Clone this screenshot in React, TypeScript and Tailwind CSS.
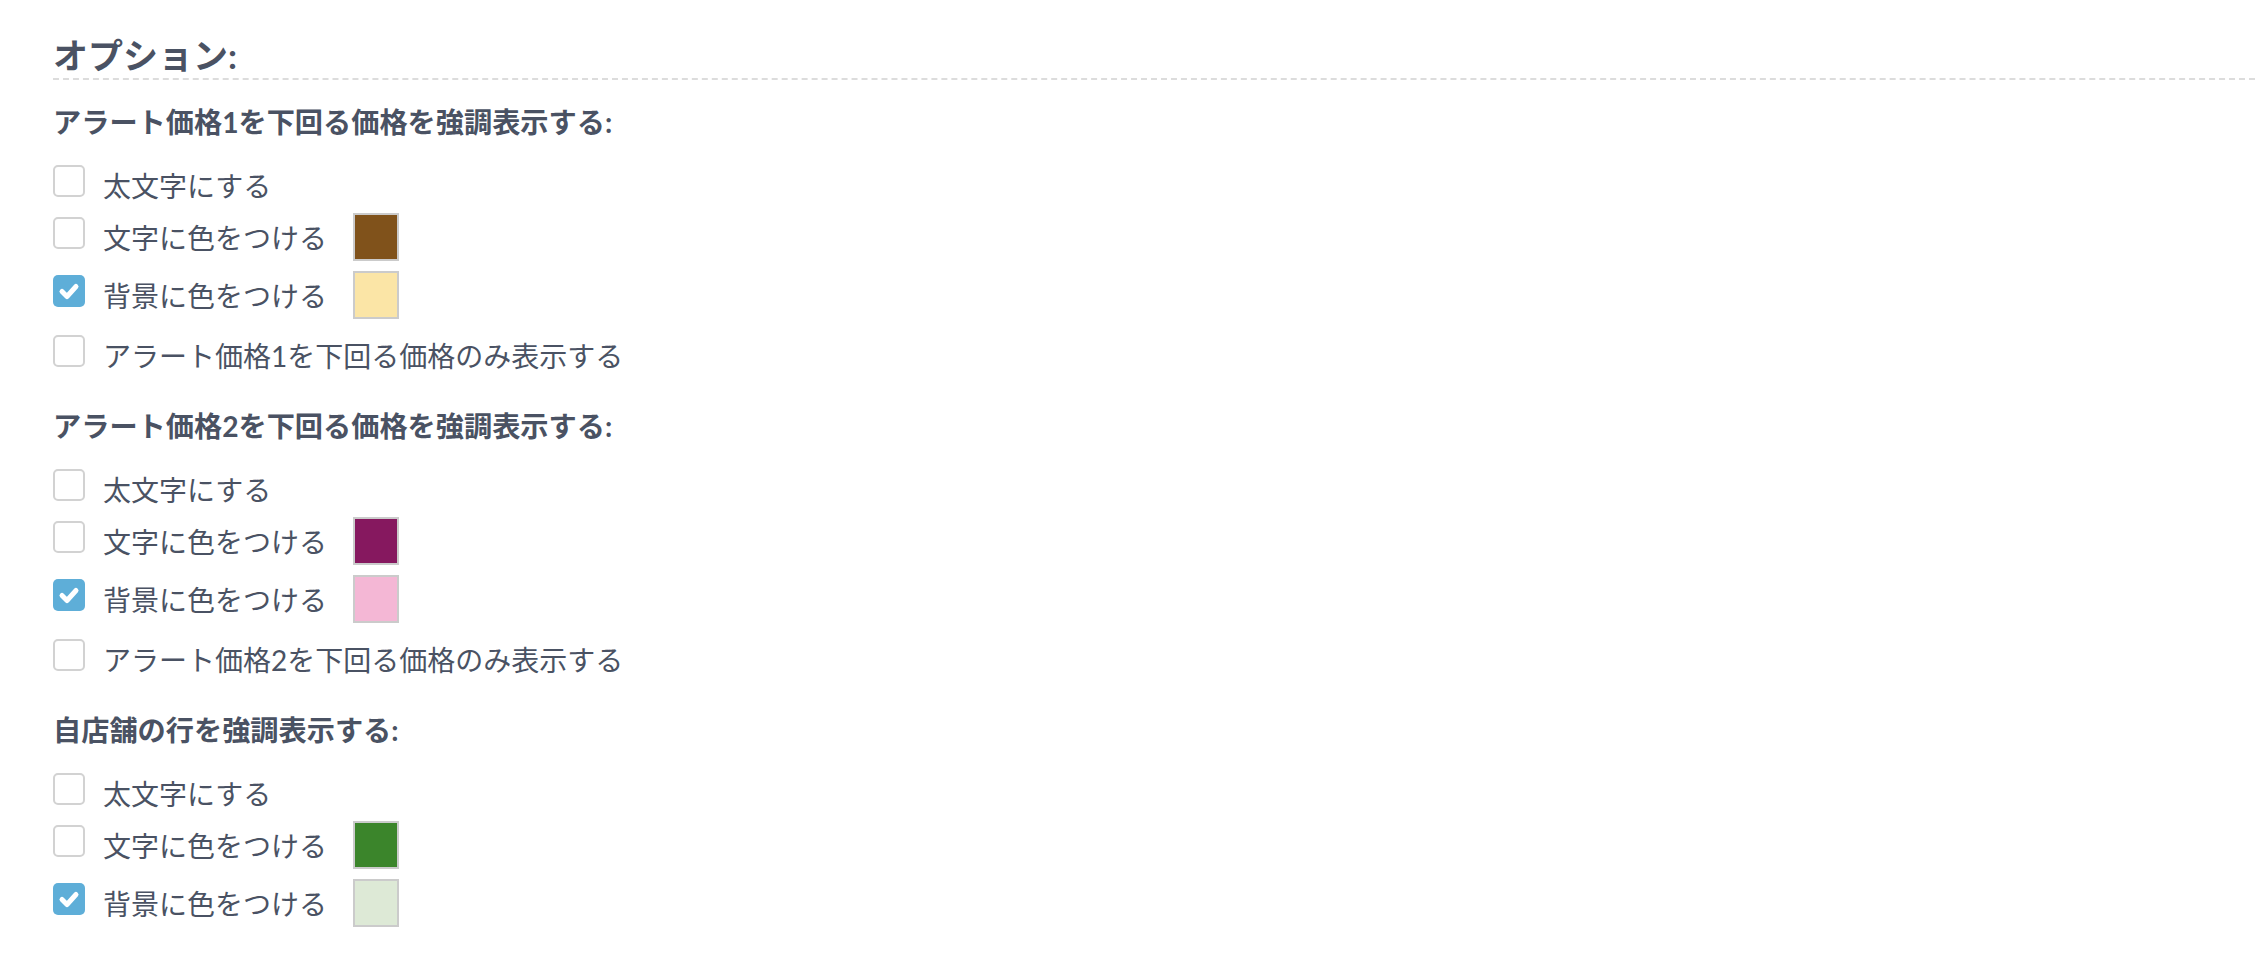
import { useState } from "react";

type Row = {
  label: string;
  checked: boolean;
  swatch?: string;
};

type Section = {
  title: string;
  rows: Row[];
};

const sections: Section[] = [
  {
    title: "アラート価格1を下回る価格を強調表示する:",
    rows: [
      { label: "太文字にする", checked: false },
      { label: "文字に色をつける", checked: false, swatch: "bg-[#80521b]" },
      { label: "背景に色をつける", checked: true, swatch: "bg-[#fbe5a6]" },
      { label: "アラート価格1を下回る価格のみ表示する", checked: false },
    ],
  },
  {
    title: "アラート価格2を下回る価格を強調表示する:",
    rows: [
      { label: "太文字にする", checked: false },
      { label: "文字に色をつける", checked: false, swatch: "bg-[#86185f]" },
      { label: "背景に色をつける", checked: true, swatch: "bg-[#f4b7d5]" },
      { label: "アラート価格2を下回る価格のみ表示する", checked: false },
    ],
  },
  {
    title: "自店舗の行を強調表示する:",
    rows: [
      { label: "太文字にする", checked: false },
      { label: "文字に色をつける", checked: false, swatch: "bg-[#3b852b]" },
      { label: "背景に色をつける", checked: true, swatch: "bg-[#dde9d6]" },
    ],
  },
];

const Checkbox = ({ checked, onToggle }: { checked: boolean; onToggle: () => void }) => (
  <button
    type="button"
    onClick={onToggle}
    className={
      checked
        ? "w-[32px] h-[32px] shrink-0 rounded-[5px] bg-[#5eaed8] flex items-center justify-center"
        : "w-[32px] h-[32px] shrink-0 rounded-[5px] border-2 border-[#d2d2d2] bg-white"
    }
  >
    {checked && (
      <svg width="32" height="32" viewBox="0 0 32 32">
        <polyline
          points="9,16.5 14,21.5 23,11.5"
          fill="none"
          stroke="white"
          strokeWidth="5"
          strokeLinecap="round"
          strokeLinejoin="round"
        />
      </svg>
    )}
  </button>
);

const OptionRow = ({ row }: { row: Row }) => {
  const [checked, setChecked] = useState(row.checked);

  return (
    <div className={row.swatch ? "flex items-start h-[48px]" : "flex items-start h-[44px]"}>
      <div className={row.swatch ? "flex items-start mt-[4px]" : "flex items-start mt-[6px]"}>
        <Checkbox checked={checked} onToggle={() => setChecked(!checked)} />
        <span className="ml-[18px] mt-[5px] leading-[32px] text-[28px] whitespace-nowrap">{row.label}</span>
      </div>
      {row.swatch && (
        <span className={`ml-[26px] w-[46px] h-[48px] border-2 border-[#cbcbcb] ${row.swatch}`} />
      )}
    </div>
  );
};

export default function App() {
  return (
    <div
      className="min-h-screen bg-white pl-[53px] text-[#4a5263]"
      style={{ fontFamily: 'Lato, "Noto Sans CJK JP", sans-serif' }}
    >
      <h2 className="pt-[33px] pb-[1px] leading-[44px] text-[35px] font-bold border-b-2 border-dashed border-[#dcdcdc]">
        オプション:
      </h2>

      <div className="mt-[22px] flex flex-col gap-[33px]">
        {sections.map((section) => (
          <div key={section.title} className="flex flex-col">
            <h3 className="leading-[40px] text-[28.2px] font-bold">{section.title}</h3>
            <div className="mt-[17px] flex flex-col gap-[10px]">
              {section.rows.map((row, i) => (
                <OptionRow key={i} row={row} />
              ))}
            </div>
          </div>
        ))}
      </div>
    </div>
  );
}
